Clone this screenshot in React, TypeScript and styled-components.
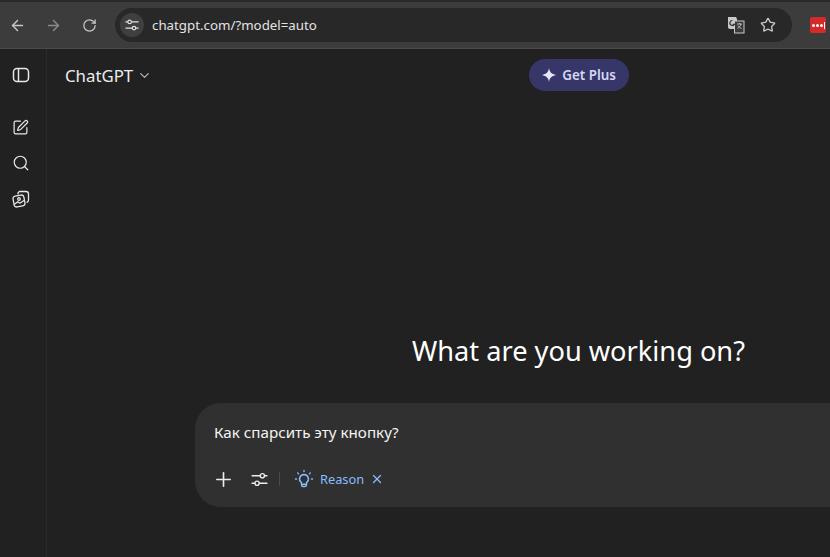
import styled, { createGlobalStyle } from "styled-components"
import { ArrowLeft, ArrowRight, RotateCw, Star, ChevronDown, Plus, X, Search, SquarePen } from "lucide-react"

const Global = createGlobalStyle`
html, body { margin: 0; padding: 0; background: #212121; }
body { width: 830px; height: 557px; overflow: hidden; font-family: "Noto Sans", "Open Sans", sans-serif; }
`

const Screen = styled.div`
width: 830px;
height: 557px;
display: flex;
flex-direction: column;
overflow: hidden;
`

const TopEdge = styled.div`
height: 2px;
background: #292929;
flex-shrink: 0;
`

const Toolbar = styled.div`
flex-shrink: 0;
background: #3c3c3c;
border-bottom: 1px solid #4a4a4a;
box-sizing: border-box;
height: 47px;
display: flex;
align-items: center;
`

const NavButton = styled.div<{ $dim?: boolean }>`
width: 36px;
padding-right: 2px;
box-sizing: border-box;
flex-shrink: 0;
display: flex;
justify-content: center;
color: ${p => (p.$dim ? "#8a8a8a" : "#c7c7c7")};
`

const Omnibox = styled.div`
margin-left: 7px;
width: 677px;
height: 34px;
flex-shrink: 0;
border-radius: 17px;
background: #282828;
display: flex;
align-items: center;
padding: 0 8px 0 5px;
box-sizing: border-box;
`

const SiteChip = styled.div`
width: 24px;
height: 24px;
border-radius: 50%;
background: #3f3f3f;
display: flex;
align-items: center;
justify-content: center;
color: #e3e3e3;
`

const Url = styled.span`
margin-left: 8px;
font-size: 13.3px;
color: #e3e3e3;
flex: 1;
`

const UrlAction = styled.div`
width: 32px;
display: flex;
justify-content: center;
color: #c7c7c7;
`

const Extension = styled.div`
margin-left: 18px;
width: 16px;
height: 16px;
border-radius: 2px;
background: #d32a2a;
display: flex;
align-items: center;
justify-content: flex-end;
gap: 1px;
padding-right: 1px;
box-sizing: border-box;
flex-shrink: 0;
`

const Dot = styled.i`
width: 3px;
height: 3px;
border-radius: 50%;
background: #fff;
`

const Bar = styled.i`
width: 1px;
height: 7px;
background: #fff;
`

const Body = styled.div`
flex: 1;
display: flex;
min-height: 0;
`

const Rail = styled.div`
width: 47px;
flex-shrink: 0;
background: #212121;
border-right: 1px solid #2a2a2a;
box-sizing: border-box;
display: flex;
flex-direction: column;
align-items: center;
padding: 17px 5px 0 0;
color: #e8e8e8;
`

const RailGroup = styled.div`
margin-top: 34px;
display: flex;
flex-direction: column;
gap: 18px;
`

const RailIcon = styled.div`
width: 18px;
height: 18px;
display: flex;
align-items: center;
justify-content: center;
`

const Main = styled.div`
flex: 1;
min-width: 0;
background: #212121;
display: flex;
flex-direction: column;
`

const Header = styled.div`
height: 51px;
flex-shrink: 0;
display: flex;
align-items: center;
padding: 1px 0 0 18px;
box-sizing: border-box;
`

const ModelName = styled.div`
font-size: 16.8px;
color: #ececec;
display: flex;
align-items: center;
gap: 4px;
width: 464px;
`

const GetPlus = styled.div`
width: 100px;
height: 32px;
border-radius: 16px;
background: #373669;
color: #d5d6f5;
font-size: 13.4px;
font-weight: 600;
display: flex;
align-items: center;
justify-content: center;
gap: 6px;
`

const Center = styled.div`
flex: 1;
display: flex;
flex-direction: column;
padding-left: 148px;
`

const Heading = styled.h1`
margin: 232px 0 0 0;
padding-left: 217px;
font-size: 27.2px;
line-height: 38px;
font-weight: 400;
color: #fff;
white-space: nowrap;
`

const Composer = styled.div`
margin-top: 33px;
width: 800px;
height: 104px;
border-radius: 26px;
background: #303030;
padding: 0 19px;
box-sizing: border-box;
`

const Prompt = styled.div`
padding-top: 19px;
font-size: 15.2px;
line-height: 20px;
color: #f4f4f4;
`

const Controls = styled.div`
margin-top: 27px;
display: flex;
align-items: center;
color: #ececec;
`

const ControlIcon = styled.div<{ $gap: number }>`
width: 18px;
height: 18px;
margin-right: ${p => p.$gap}px;
display: flex;
align-items: center;
justify-content: center;
svg { flex-shrink: 0; }
`

const Divider = styled.div`
width: 1px;
height: 14px;
background: #4a4a4a;
margin-right: 14px;
`

const ReasonTag = styled.div`
display: flex;
align-items: center;
color: #85bdff;
font-size: 12.8px;
gap: 6px;
`

function Sliders({ size = 16, mirror = false }: { size?: number; mirror?: boolean }) {
  return (
    <svg width={size} height={size} viewBox="0 0 16 16" fill="none" stroke="currentColor" strokeWidth="1.3" strokeLinecap="round" transform={mirror ? "scale(-1 1)" : undefined}>
      <path d="M1 4.500h7.500M13 4.500h2M1 11.500h2.500M8 11.500h7" />
      <circle cx="10.700" cy="4.500" r="2" />
      <circle cx="5.700" cy="11.500" r="2" />
    </svg>
  )
}

function Translate() {
  return (
    <svg width="18" height="18" viewBox="0 0 18 18">
      <path d="M1 1h8l1 2v10H3a2 2 0 0 1-2-2z" fill="#c9c9c9" />
      <rect x="7.500" y="5" width="9.500" height="12" fill="#3a3a3a" stroke="#c9c9c9" strokeWidth="1" />
      <path d="M5.500 4.500a2.500 2.500 0 1 0 2 3.800H5.600" fill="none" stroke="#333" strokeWidth="1.200" />
      <path d="M10 8h5M12.500 7v1M14 8c-.5 2-2 3.500-3.500 4.500M11 9.500c.8 1.300 2 2.500 3.500 3" fill="none" stroke="#c9c9c9" strokeWidth="0.900" />
    </svg>
  )
}

function Panel() {
  return (
    <svg width="18" height="18" viewBox="0 0 18 18" fill="none" stroke="currentColor" strokeWidth="1.500">
      <rect x="1.500" y="2.500" width="15" height="13" rx="3.500" />
      <path d="M6.500 2.500v13" />
    </svg>
  )
}

function Gallery() {
  return (
    <svg width="18" height="18" viewBox="0 0 18 18" fill="none" stroke="currentColor" strokeWidth="1.300" strokeLinecap="round" strokeLinejoin="round">
      <path d="M6 4V3.500a2 2 0 0 1 2-2h6a2.500 2.500 0 0 1 2.500 2.500v6a2.500 2.500 0 0 1-1.500 2.300" />
      <rect x="1.500" y="5.500" width="11" height="11" rx="2.500" transform="rotate(-10 7 11)" />
      <circle cx="7" cy="9" r="1.300" />
      <path d="M2.800 14l3-2.300 2 1.500 3.800-2.500" />
    </svg>
  )
}

function Bulb() {
  return (
    <svg width="20" height="20" viewBox="0 0 20 20" fill="none" stroke="currentColor" strokeWidth="1.400" strokeLinecap="round" strokeLinejoin="round">
      <path d="M10 5.500a4.500 4.500 0 0 0-2.500 8.200v2.300a1.500 1.500 0 0 0 1.500 1.500h2a1.500 1.500 0 0 0 1.500-1.500v-2.300A4.500 4.500 0 0 0 10 5.500z" />
      <path d="M7.800 15.200h4.400M10 1.500v1M3.800 4l.7.700M16.200 4l-.7.700M1.500 10h1M17.500 10h1" />
    </svg>
  )
}

function Spark() {
  return (
    <svg width="14" height="14" viewBox="0 0 14 14" fill="#e6e6fb">
      <path d="M7 0c.6 4 2.500 6 7 7-4.500 1-6.400 3-7 7-.6-4-2.500-6-7-7 4.500-1 6.400-3 7-7z" />
    </svg>
  )
}

export default function App() {
  return (
    <Screen>
      <Global />
      <TopEdge />
      <Toolbar>
        <NavButton><ArrowLeft size={17} /></NavButton>
        <NavButton $dim><ArrowRight size={17} /></NavButton>
        <NavButton><RotateCw size={15} /></NavButton>
        <Omnibox>
          <SiteChip><Sliders size={14} mirror /></SiteChip>
          <Url>chatgpt.com/?model=auto</Url>
          <UrlAction><Translate /></UrlAction>
          <UrlAction><Star size={16} /></UrlAction>
        </Omnibox>
        <Extension><Dot /><Dot /><Dot /><Bar /></Extension>
      </Toolbar>
      <Body>
        <Rail>
          <RailIcon><Panel /></RailIcon>
          <RailGroup>
            <RailIcon><SquarePen size={17} strokeWidth={1.700} /></RailIcon>
            <RailIcon><Search size={18} strokeWidth={1.600} /></RailIcon>
            <RailIcon><Gallery /></RailIcon>
          </RailGroup>
        </Rail>
        <Main>
          <Header>
            <ModelName>ChatGPT <ChevronDown size={15} color="#b4b4b4" /></ModelName>
            <GetPlus><Spark />Get Plus</GetPlus>
          </Header>
          <Center>
            <Heading>What are you working on?</Heading>
            <Composer>
              <Prompt>Как спарсить эту кнопку?</Prompt>
              <Controls>
                <ControlIcon $gap={18}><Plus size={23} strokeWidth={1.700} /></ControlIcon>
                <ControlIcon $gap={11}><Sliders size={17} /></ControlIcon>
                <Divider />
                <ReasonTag>
                  <Bulb />
                  Reason
                  <X size={14} strokeWidth={2.200} />
                </ReasonTag>
              </Controls>
            </Composer>
          </Center>
        </Main>
      </Body>
    </Screen>
  )
}
